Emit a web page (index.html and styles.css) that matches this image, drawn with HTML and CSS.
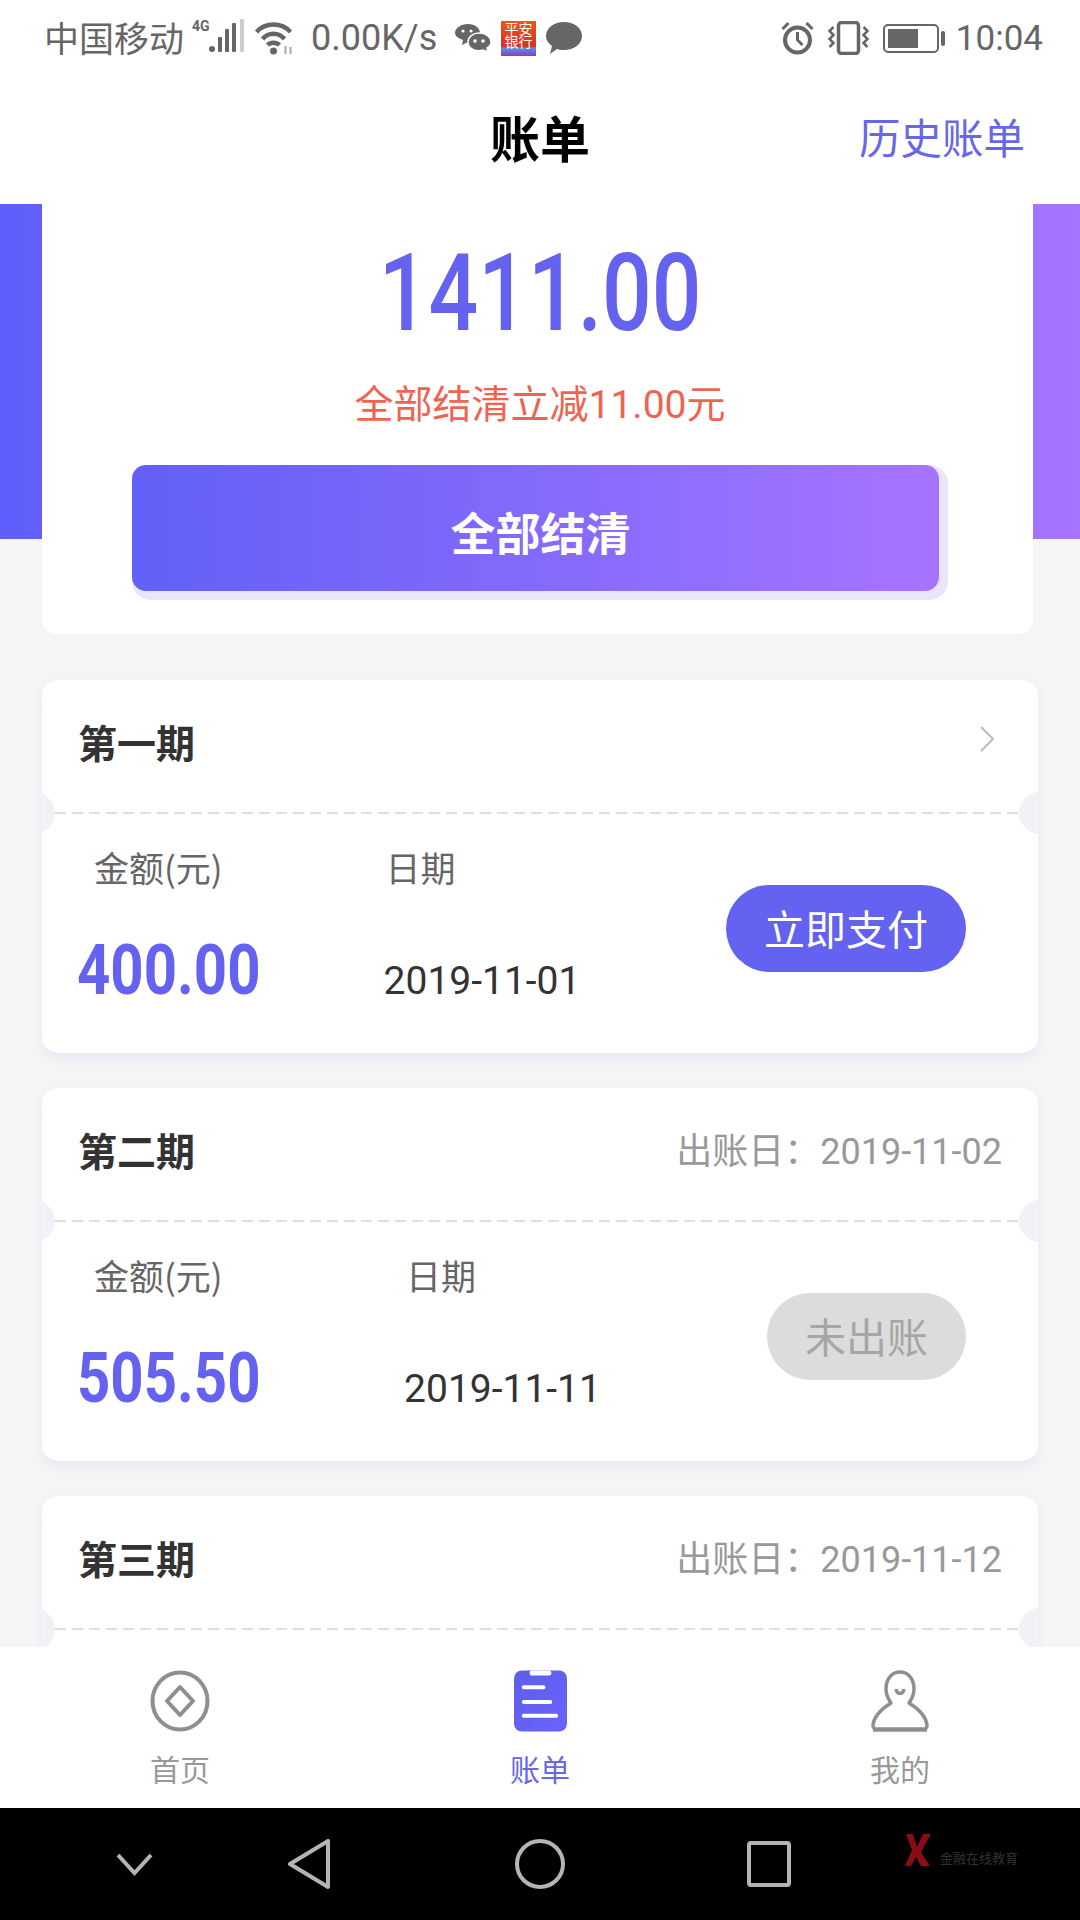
FILE: index.html
```html
<!DOCTYPE html>
<html lang="zh-CN">
<head>
    <meta charset="utf-8">
    <title>账单</title>
    <link rel="stylesheet" href="styles.css">
</head>
<body>
<div class="app">
    <!-- 状态栏 -->
    <div class="statusbar">
        <span class="carrier">中国移动</span>
        <svg class="ic-signal" width="53" height="34" viewBox="0 0 53 34">
            <text x="0" y="12" class="net">4G</text>
            <circle cx="20" cy="30" r="3" fill="#666"/>
            <rect x="26" y="18" width="4" height="15" rx="1" fill="#666"/>
            <rect x="33" y="10" width="4" height="23" rx="1" fill="#666"/>
            <rect x="40" y="4" width="4" height="29" rx="1" fill="#666"/>
            <rect x="48" y="0" width="4" height="33" rx="1" fill="#ccc"/>
        </svg>
        <svg class="ic-wifi" width="43" height="34" viewBox="0 0 40 34" fill="none" stroke="#666" stroke-width="4.500">
            <path d="M2 11 C11 1 27 1 36 11"/>
            <path d="M8 18 C14 11 24 11 30 18"/>
            <path d="M13 24 C16 21 22 21 25 24"/>
            <circle cx="19" cy="30" r="3.500" fill="#666" stroke="none"/>
            <path d="M31 25 V33 M36 26 V33" stroke="#aaa" stroke-width="2"/>
        </svg>
        <span class="speed">0.00K/s</span>
        <svg class="ic-wechat" width="36" height="28" viewBox="0 0 36 28" fill="#666">
            <path d="M13 0 C20 0 25 4 25 9 C25 14 20 18 13 18 L7 21 L8 16 C3 14 0 12 0 9 C0 4 6 0 13 0Z"/>
            <path d="M24 9 C31 9 36 13 36 18 C36 21 34 23 32 24 L33 28 L28 26 C21 28 13 25 13 18 C13 13 18 9 24 9Z" stroke="#fff" stroke-width="1.500"/>
            <circle cx="20" cy="17" r="1.800" fill="#fff"/><circle cx="28" cy="17" r="1.800" fill="#fff"/>
            <circle cx="8" cy="7" r="1.600" fill="#fff"/><circle cx="16" cy="7" r="1.600" fill="#fff"/>
        </svg>
        <span class="bank-icon">平安<br>银行</span>
        <svg class="ic-bubble" width="36" height="32" viewBox="0 0 36 32" fill="#666">
            <path d="M18 0 C28 0 36 6 36 14 C36 22 28 28 18 28 C15 28 13 28 11 27 L4 32 L6 24 C2 21 0 18 0 14 C0 6 8 0 18 0Z"/>
        </svg>
        <div class="status-right">
            <svg width="33" height="34" viewBox="0 0 32 34" fill="none" stroke="#666">
                <circle cx="16" cy="19" r="12.500" stroke-width="4"/>
                <path d="M16 11 V19 L21 24" stroke-width="3"/>
                <path d="M1 8 L7 2 M31 8 L25 2" stroke-width="3"/>
            </svg>
            <svg width="45" height="34" viewBox="0 0 42 34" fill="none" stroke="#666">
                <rect x="11" y="1.500" width="20" height="31" rx="3" stroke-width="3.500"/>
                <path d="M6 6 L2 10 L6 14 L2 18 L6 22 L2 26 M36 6 L40 10 L36 14 L40 18 L36 22 L40 26" stroke-width="2.500"/>
            </svg>
            <div class="battery"><div class="battery-level"></div></div>
            <span class="clock">10:04</span>
        </div>
    </div>

    <!-- 标题栏 -->
    <div class="navbar">
        <span></span>
        <h1 class="nav-title">账单</h1>
        <a class="nav-link">历史账单</a>
    </div>

    <div class="content">
        <div class="hero">
            <div class="hero-card">
                <div class="total">1411.00</div>
                <div class="discount">全部结清立减11.00元</div>
                <button class="settle-btn">全部结清</button>
            </div>
        </div>

        <div class="bill-list">
            <div class="bill">
                <div class="bill-head">
                    <span class="period">第一期</span>
                    <svg class="chevron" width="14" height="26" viewBox="0 0 14 26" fill="none" stroke="#bbb" stroke-width="2">
                        <path d="M1 1 L13 13 L1 25"/>
                    </svg>
                </div>
                <div class="divider"><i class="notch notch-left"></i><i class="dash"></i><i class="notch notch-right"></i></div>
                <div class="bill-body">
                    <div class="col-amount">
                        <div class="label">金额(元)</div>
                        <div class="amount">400.00</div>
                    </div>
                    <div class="col-date">
                        <div class="label">日期</div>
                        <div class="date">2019-11-01</div>
                    </div>
                    <button class="pay-btn">立即支付</button>
                </div>
            </div>

            <div class="bill">
                <div class="bill-head">
                    <span class="period">第二期</span>
                    <span class="due">出账日：2019-11-02</span>
                </div>
                <div class="divider"><i class="notch notch-left"></i><i class="dash"></i><i class="notch notch-right"></i></div>
                <div class="bill-body">
                    <div class="col-amount">
                        <div class="label">金额(元)</div>
                        <div class="amount">505.50</div>
                    </div>
                    <div class="col-date">
                        <div class="label">日期</div>
                        <div class="date">2019-11-11</div>
                    </div>
                    <button class="pay-btn pay-btn-off">未出账</button>
                </div>
            </div>

            <div class="bill">
                <div class="bill-head">
                    <span class="period">第三期</span>
                    <span class="due">出账日：2019-11-12</span>
                </div>
                <div class="divider"><i class="notch notch-left"></i><i class="dash"></i><i class="notch notch-right"></i></div>
            </div>
        </div>
    </div>

    <!-- 底部导航 -->
    <div class="tabbar">
        <div class="tab">
            <svg width="60" height="62" viewBox="0 0 60 62" fill="none" stroke="#8f8f8f" stroke-width="4">
                <ellipse cx="30" cy="31" rx="27.500" ry="28.500"/>
                <path d="M30 17 L43 31 L30 45 L17 31Z" stroke-linejoin="round"/>
            </svg>
            <span>首页</span>
        </div>
        <div class="tab tab-active">
            <svg width="53" height="62" viewBox="0 0 54 62">
                <defs>
                    <linearGradient id="billFill" x1="0" y1="0" x2="1" y2="1">
                        <stop offset="0" stop-color="#5f5fe8"/>
                        <stop offset="1" stop-color="#6a62ff"/>
                    </linearGradient>
                </defs>
                <rect x="0" y="0" width="54" height="62" rx="8" fill="url(#billFill)"/>
                <rect x="16" y="0" width="22" height="5" rx="2" fill="#fff"/>
                <rect x="8" y="15" width="24" height="4" rx="2" fill="#fff"/>
                <rect x="8" y="30" width="31" height="4" rx="2" fill="#fff"/>
                <rect x="8" y="44" width="37" height="4" rx="2" fill="#fff"/>
            </svg>
            <span>账单</span>
        </div>
        <div class="tab">
            <svg width="60" height="62" viewBox="0 0 60 62" fill="none" stroke="#8f8f8f" stroke-width="3.500">
                <path d="M30 2 C39 2 44 10 44 19 C44 26 41 30 39 33 C47 38 56 46 57 55 C57 58 56 59 53 59 H7 C4 59 3 58 3 55 C4 46 13 38 21 33 C19 30 16 26 16 19 C16 10 21 2 30 2Z" stroke-linejoin="round"/>
                <path d="M26 19 C27 25 33 25 34 19"/>
                <path d="M3 60 H57" stroke-width="3.500"/>
            </svg>
            <span>我的</span>
        </div>
    </div>

    <!-- 系统导航 -->
    <div class="sysbar">
        <svg width="37" height="23" viewBox="0 0 37 23" fill="none" stroke="#b4b4b4" stroke-width="4">
            <path d="M2 2 L18.500 20 L35 2"/>
        </svg>
        <svg width="42" height="50" viewBox="0 0 42 50" fill="none" stroke="#b4b4b4" stroke-width="4" stroke-linejoin="round">
            <path d="M40 2 V48 L2 25Z"/>
        </svg>
        <svg width="50" height="50" viewBox="0 0 50 50" fill="none" stroke="#b4b4b4" stroke-width="4">
            <circle cx="25" cy="25" r="23"/>
        </svg>
        <svg width="44" height="46" viewBox="0 0 44 46" fill="none" stroke="#b4b4b4" stroke-width="4" stroke-linejoin="round">
            <rect x="2" y="2" width="40" height="42" rx="2"/>
        </svg>
        <div class="watermark">
            <svg width="26" height="32" viewBox="0 0 26 32" fill="#8b0d14">
                <path d="M1 0 H8 L12 13 L18 0 H26 L16 18 L25 32 H16 L11 23 L6 32 H0 L7 16Z"/>
            </svg>
            <span>金融在线教育</span>
        </div>
    </div>
</div>
</body>
</html>
```

FILE: styles.css
```css
* {
    box-sizing: border-box;
}
body {
    margin: 0;
    background: #f5f5f5;
    font-family: Roboto, "Noto Sans CJK SC", sans-serif;
}
button {
    border: none;
    font-family: inherit;
}
.app {
    display: flex;
    flex-direction: column;
    width: 1080px;
    height: 1920px;
    overflow: hidden;
}

/* 状态栏 */
.statusbar {
    display: flex;
    align-items: center;
    height: 80px;
    padding: 0 37px 4px 45px;
    background: #fff;
    color: #666;
    font-size: 35px;
}
.carrier {
    margin: -4px 8px 0 -1px;
    width: 140px;
    white-space: nowrap;
}
.net {
    font-size: 14px;
    font-weight: 700;
    fill: #666;
}
.ic-signal {
    margin-top: -4px;
}
.ic-wifi {
    margin-left: 8px;
}
.speed {
    margin-left: 15px;
    width: 126px;
    font-size: 36px;
    white-space: nowrap;
}
.ic-wechat {
    margin-left: 18px;
}
.bank-icon {
    width: 35px;
    height: 35px;
    margin-left: 10px;
    padding-top: 2px;
    background: linear-gradient(#f0541e 0, #d8301f 72%, #5c8fe0 78%, #8a3cc0 100%);
    color: #fff;
    font-size: 14px;
    line-height: 13px;
    text-align: center;
    overflow: hidden;
}
.ic-bubble {
    margin-left: 10px;
}
.status-right {
    display: flex;
    align-items: center;
    margin-left: auto;
}
.status-right svg + svg {
    margin-left: 12px;
}
.battery {
    position: relative;
    width: 56px;
    height: 29px;
    margin-left: 12px;
    padding: 3px;
    border: 2px solid #666;
    border-radius: 5px;
}
.battery::after {
    content: "";
    position: absolute;
    top: 5px;
    right: -8px;
    width: 4px;
    height: 15px;
    border-radius: 2px;
    background: #666;
}
.battery-level {
    width: 30px;
    height: 100%;
    background: #666;
}
.clock {
    margin-left: 17px;
}

/* 标题栏 */
.navbar {
    display: grid;
    grid-template-columns: 1fr auto 1fr;
    align-items: center;
    height: 124px;
    padding-bottom: 12px;
    background: #fff;
}
.nav-title {
    margin: 0;
    color: #000;
    font-size: 50px;
    font-weight: 700;
}
.nav-link {
    justify-self: end;
    padding-right: 55px;
    color: #6a67e6;
    font-size: 41.500px;
}

.content {
    flex: 1;
    overflow: hidden;
}

/* 顶部汇总 */
.hero {
    padding: 0 47px 0 42px;
    background: linear-gradient(90deg, #605ffb, #a675ff) no-repeat;
    background-size: 100% 335px;
}
.hero-card {
    display: flex;
    flex-direction: column;
    align-items: center;
    height: 430px;
    padding: 29px 0 0 5px;
    background: #fff;
    border-radius: 0 0 14px 14px;
}
.total {
    color: #6462ee;
    font-size: 108px;
    font-weight: 500;
    line-height: 120px;
    transform: scaleX(.81);
}
.discount {
    margin-top: 27px;
    color: #ef6450;
    font-size: 39px;
    line-height: 50px;
}
.settle-btn {
    align-self: flex-start;
    width: 807px;
    height: 126px;
    margin: 35px 0 0 85px;
    padding: 6px 0 0 10px;
    border-radius: 14px;
    background: linear-gradient(90deg, #6260f8, #a674ff);
    box-shadow: 4.500px 4.500px 0 4.500px #e9e5fa;
    color: #fff;
    font-size: 45px;
    font-weight: 700;
}

/* 账单卡片 */
.bill-list {
    display: flex;
    flex-direction: column;
    gap: 35px;
    padding: 46px 42px 0;
}
.bill {
    flex: none;
    border-radius: 16px;
    background: #fff;
    box-shadow: 0 5px 10px #e7e7f6;
}
.bill-head {
    display: flex;
    align-items: center;
    justify-content: space-between;
    height: 111px;
    padding: 16px 36px 0 36px;
}
.period {
    margin-top: -5px;
    color: #333;
    font-size: 39px;
    font-weight: 700;
}
.chevron {
    margin: -10px 8px 0 0;
}
.due {
    margin-top: -8px;
    color: #999;
    font-family: Roboto, "Noto Sans CJK TC", sans-serif;
    font-size: 36px;
}
.divider {
    position: relative;
    display: flex;
    align-items: center;
    height: 44px;
    padding: 0 19px 0 13px;
    overflow: hidden;
}
.dash {
    display: block;
    width: 100%;
    height: 2px;
    background: repeating-linear-gradient(90deg, #ddd 0 11px, transparent 11px 17px);
}
.notch {
    position: absolute;
    top: 1px;
    width: 42px;
    height: 42px;
    border-radius: 50%;
    background: #f1f1f8;
}
.notch-left {
    left: -29px;
}
.notch-right {
    right: -23px;
}
.bill-body {
    display: flex;
    justify-content: space-between;
    height: 218px;
    padding: 10px 72px 0 36px;
}
.col-amount {
    width: 160px;
    white-space: nowrap;
}
.col-amount .label {
    padding-left: 16px;
}
.col-date .label {
    padding-left: 2px;
}
.label {
    color: #666;
    font-family: "Noto Sans CJK SC", sans-serif;
    font-size: 35px;
    line-height: 44px;
    white-space: nowrap;
}
.amount {
    margin: 41px 0 0 -1px;
    color: #6462ee;
    font-size: 70px;
    font-weight: 700;
    line-height: 80px;
    transform: scaleX(.83);
    transform-origin: left;
}
.date {
    margin-top: 67px;
    color: #333;
    font-size: 39px;
    line-height: 50px;
    white-space: nowrap;
}
.pay-btn {
    height: 87px;
    margin-top: 40px;
    padding: 0 38px 3px;
    border-radius: 44px;
    background: #6462f0;
    color: #fff;
    font-size: 41px;
    white-space: nowrap;
}
.pay-btn-off {
    background: #dcdcdc;
    color: #a6a6a6;
}

/* 底部导航 */
.tabbar {
    display: grid;
    grid-template-columns: repeat(3, 1fr);
    position: relative;
    height: 161px;
    padding-top: 23px;
    background: #fff;
}
.tab {
    display: flex;
    flex-direction: column;
    align-items: center;
    gap: 19px;
    color: #999;
    font-size: 30px;
    line-height: 40px;
}
.tab-active {
    color: #6a67e6;
}

/* 系统导航 */
.sysbar {
    position: relative;
    display: grid;
    grid-template-columns: 269px 80px 382px 76px;
    justify-items: center;
    align-items: center;
    height: 112px;
    background: #000;
}
.watermark {
    position: absolute;
    top: 26px;
    left: 905px;
    display: flex;
    align-items: flex-end;
    gap: 9px;
    color: #333;
    font-size: 13px;
}
.watermark span {
    white-space: nowrap;
    line-height: 14px;
}
```
